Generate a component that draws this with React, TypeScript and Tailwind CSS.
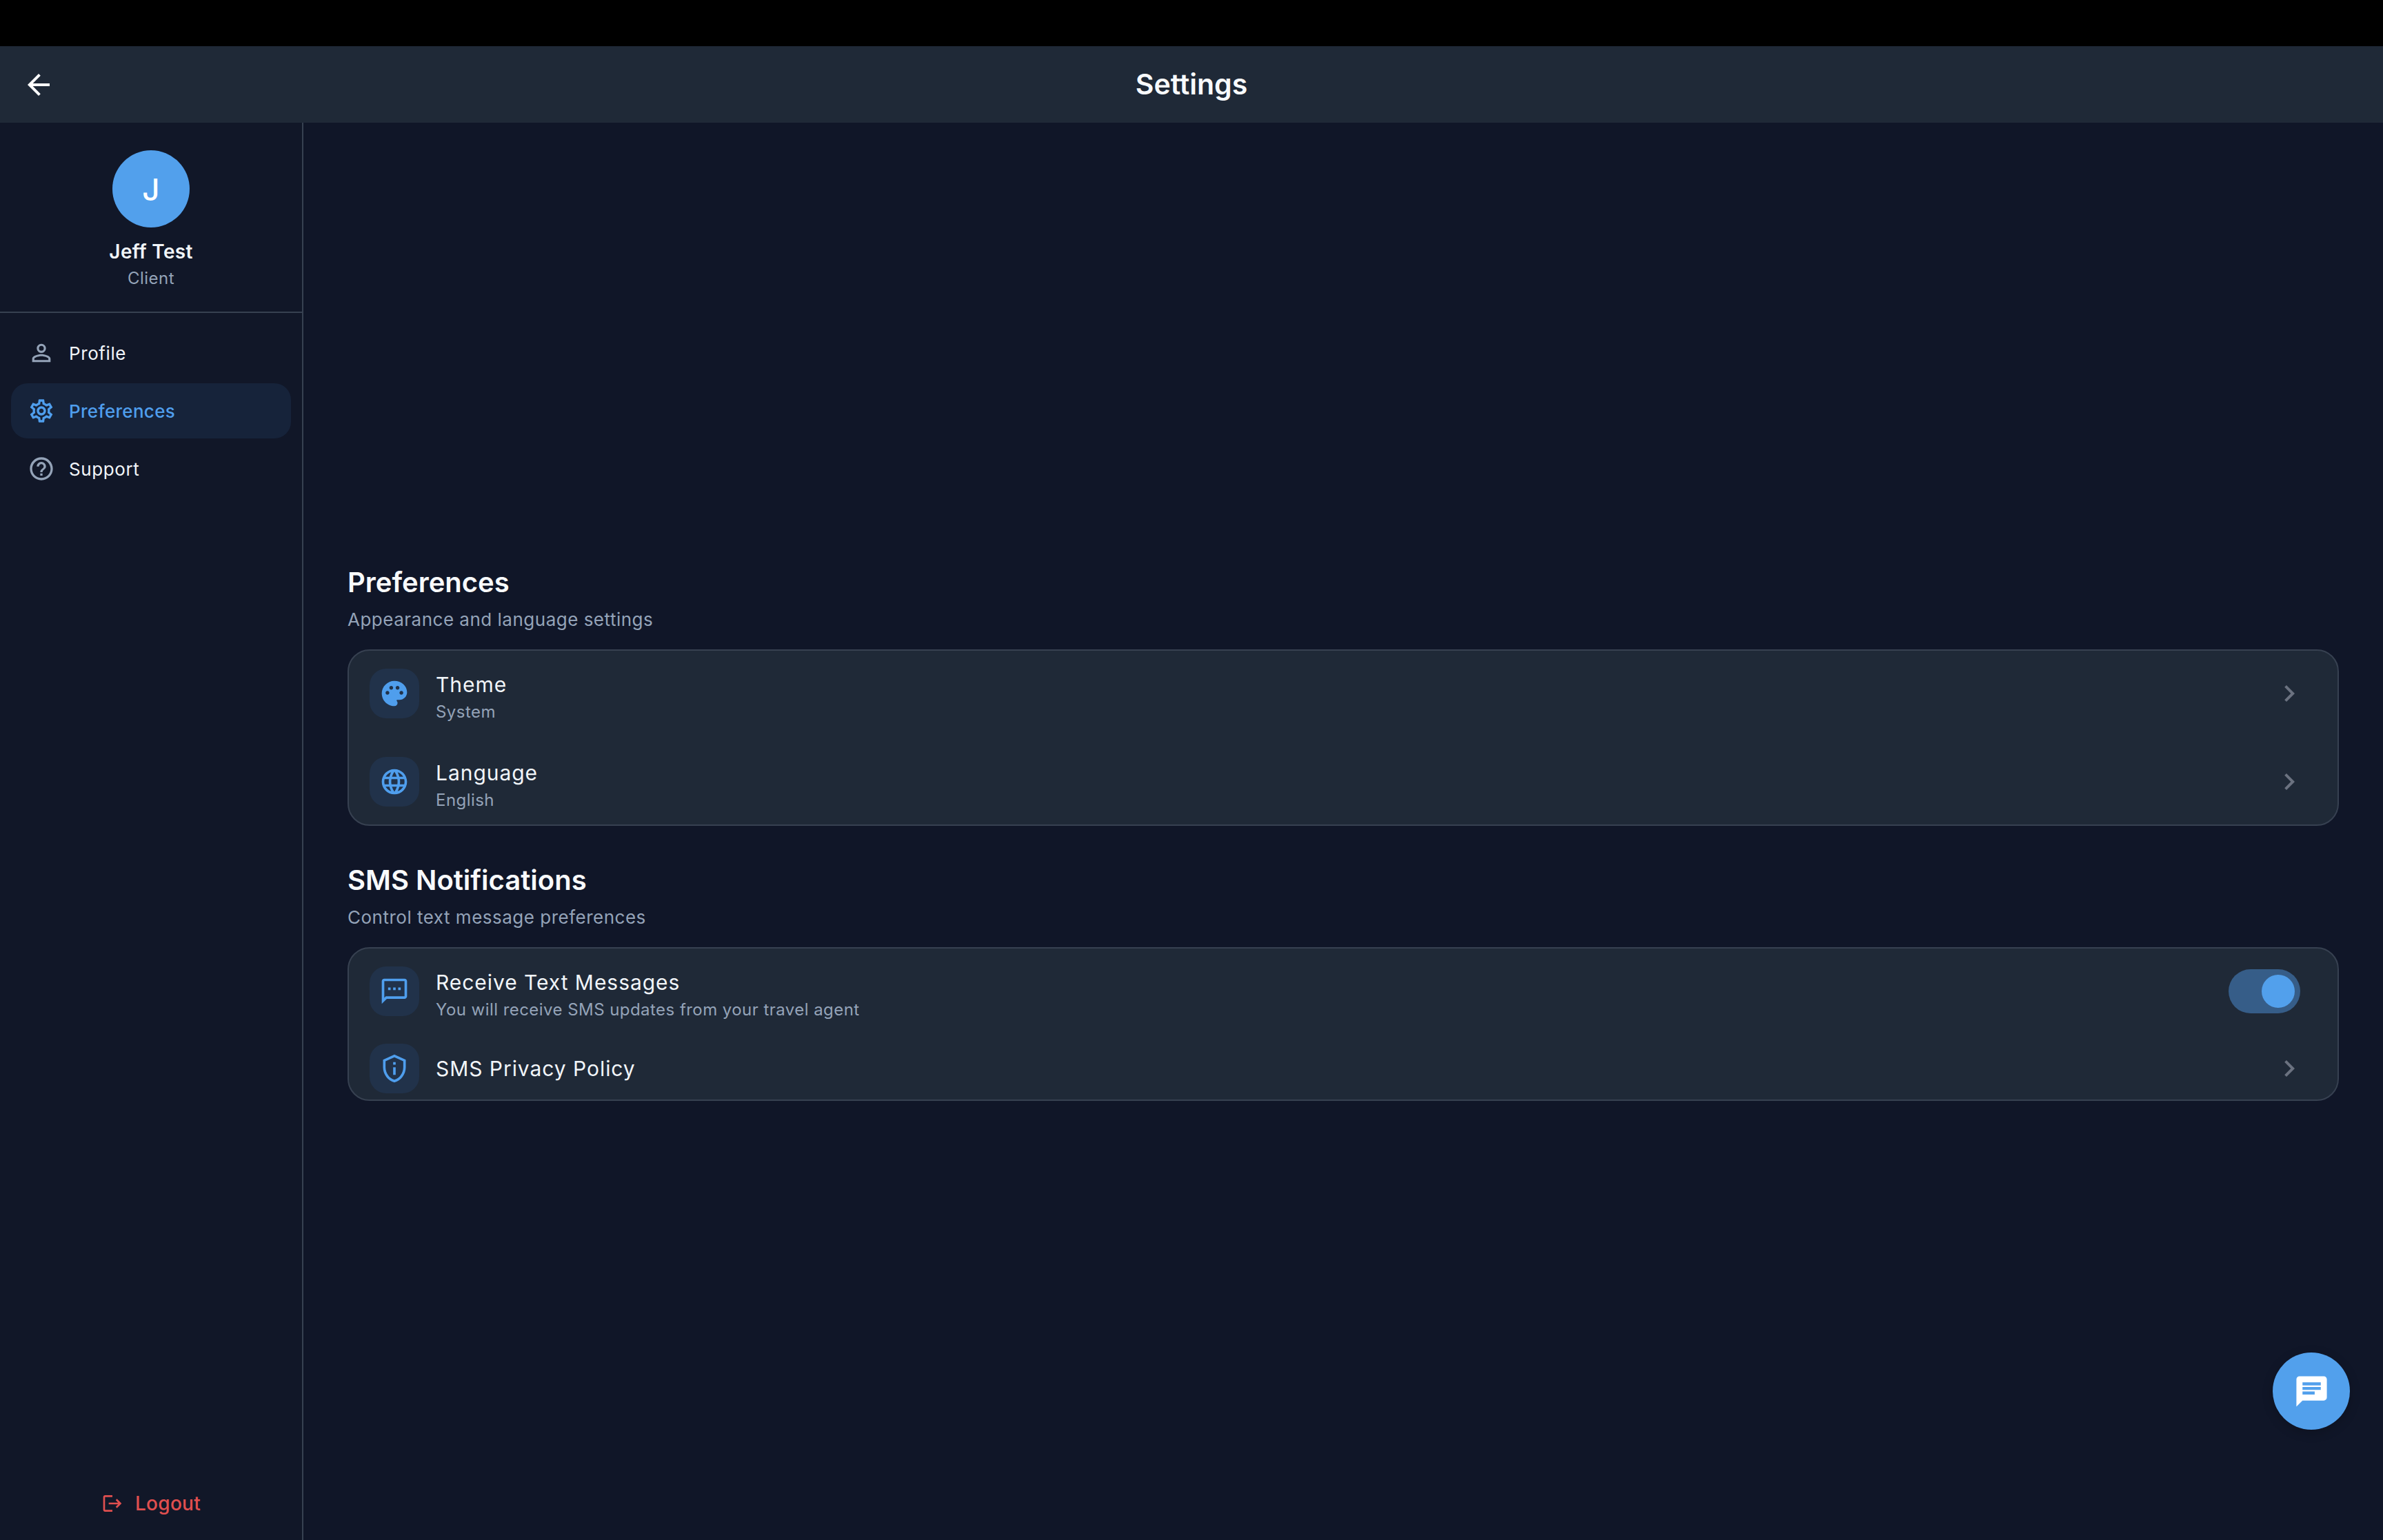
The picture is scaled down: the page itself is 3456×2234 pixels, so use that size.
import type { ReactNode } from "react";
import {
  MdArrowBack,
  MdChat,
  MdChevronRight,
  MdHelpOutline,
  MdLanguage,
  MdLogout,
  MdOutlinePrivacyTip,
  MdOutlineSettings,
  MdOutlineSms,
  MdPalette,
  MdPersonOutline,
} from "react-icons/md";

const font = { fontFamily: "Inter, 'Liberation Sans', sans-serif" };

function NavItem({ icon, label, active }: { icon: ReactNode; label: string; active?: boolean }) {
  return (
    <div
      className={`flex h-[80px] items-center gap-[20px] rounded-[24px] px-[24px] ${
        active ? "bg-[#16233a] text-[#4f9eed]" : "text-[#f1f5f9]"
      }`}
    >
      <span className={active ? "text-[#4f9eed]" : "text-[#94a3b8]"}>{icon}</span>
      <span className={active ? "text-[26px] font-medium tracking-[0.3px]" : "text-[26px] tracking-[0.6px]"}>{label}</span>
    </div>
  );
}

function IconBox({ children }: { children: ReactNode }) {
  return (
    <div className="flex h-[72px] w-[72px] shrink-0 items-center justify-center rounded-[24px] bg-[#21324a] text-[#4f9eed]">
      {children}
    </div>
  );
}

function Row({
  icon,
  title,
  subtitle,
  tall = true,
  right,
}: {
  icon: ReactNode;
  title: string;
  subtitle?: string;
  tall?: boolean;
  right?: ReactNode;
}) {
  return (
    <div className={`flex items-center gap-[24px] pl-[30px] pr-[46px] ${tall ? "h-[124px]" : "h-[91px]"}`}>
      <IconBox>{icon}</IconBox>
      <div className={subtitle ? "min-w-0 flex-1 pt-[10px]" : "min-w-0 flex-1"}>
        <p className="text-[30px] leading-[40px] tracking-[0.95px] text-[#f1f5f9]">{title}</p>
        {subtitle && <p className="mt-[4px] text-[24px] leading-[32px] tracking-[0.45px] text-[#94a3b8]">{subtitle}</p>}
      </div>
      {right ?? <MdChevronRight size={48} className="text-[#6b7280]" />}
    </div>
  );
}

function Section({ title, subtitle, children }: { title: string; subtitle: string; children: ReactNode }) {
  return (
    <section>
      <h2 className="text-[40px] font-semibold leading-[50px] text-[#f8fafc]">{title}</h2>
      <p className="mt-[11px] text-[26px] leading-[36px] tracking-[0.5px] text-[#94a3b8]">{subtitle}</p>
      <div className="mt-[25px] flex flex-col gap-[4px] rounded-[32px] border-2 border-[#374151] bg-[#1f2937]">
        {children}
      </div>
    </section>
  );
}

export default function App() {
  return (
    <div style={font} className="flex h-[2234px] flex-col overflow-hidden bg-[#101628]">
      <div className="h-[67px] shrink-0 bg-black" />

      <header className="flex h-[111px] shrink-0 items-center justify-between bg-[#1f2937] pl-[32px] pr-[32px]">
        <MdArrowBack size={48} className="text-white" />
        <h1 className="text-[41px] font-semibold text-[#f8fafc]">Settings</h1>
        <div className="w-[48px]" />
      </header>

      <div className="flex min-h-0 flex-1">
        <aside className="flex w-[440px] shrink-0 flex-col border-r-2 border-[#374151] bg-[#111728]">
          <div className="flex h-[276px] shrink-0 flex-col items-center border-b-2 border-[#374151] pt-[40px]">
            <div className="flex h-[112px] w-[112px] items-center justify-center rounded-full bg-[#52a0ec] pt-[2px] text-[44px] font-medium text-white">
              J
            </div>
            <p className="mt-[16px] text-[28px] font-semibold leading-[38px] tracking-[0.3px] text-[#f1f5f9]">Jeff Test</p>
            <p className="mt-[4px] text-[24px] leading-[32px] tracking-[0.5px] text-[#94a3b8]">Client</p>
          </div>

          <nav className="flex flex-col gap-[4px] px-[16px] pt-[18px]">
            <NavItem icon={<MdPersonOutline size={40} />} label="Profile" />
            <NavItem icon={<MdOutlineSettings size={40} />} label="Preferences" active />
            <NavItem icon={<MdHelpOutline size={40} />} label="Support" />
          </nav>

          <div className="mt-auto flex items-center justify-center gap-[17px] pb-[33px] text-[#e04f4f]">
            <MdLogout size={32} />
            <span className="text-[28px] font-medium leading-[40px] tracking-[0.3px]">Logout</span>
          </div>
        </aside>

        <main className="relative min-w-0 flex-1 px-[64px] pt-[642px]">
          <div className="flex flex-col gap-[54px]">
            <Section title="Preferences" subtitle="Appearance and language settings">
              <Row icon={<MdPalette size={44} />} title="Theme" subtitle="System" />
              <Row icon={<MdLanguage size={44} />} title="Language" subtitle="English" />
            </Section>

            <Section title="SMS Notifications" subtitle="Control text message preferences">
              <Row
                icon={<MdOutlineSms size={44} />}
                title="Receive Text Messages"
                subtitle="You will receive SMS updates from your travel agent"
                right={
                  <div className="mr-[8px] flex h-[64px] w-[104px] items-center justify-end rounded-full bg-[#365d88] pr-[8px]">
                    <div className="h-[48px] w-[48px] rounded-full bg-[#52a0ec]" />
                  </div>
                }
              />
              <Row icon={<MdOutlinePrivacyTip size={44} />} title="SMS Privacy Policy" tall={false} />
            </Section>
          </div>

          <button className="absolute bottom-[160px] right-[48px] flex h-[112px] w-[112px] items-center justify-center rounded-full bg-[#52a0ec] text-white shadow-[0_4px_16px_rgba(0,0,0,0.2)]">
            <MdChat size={53} />
          </button>
        </main>
      </div>
    </div>
  );
}
